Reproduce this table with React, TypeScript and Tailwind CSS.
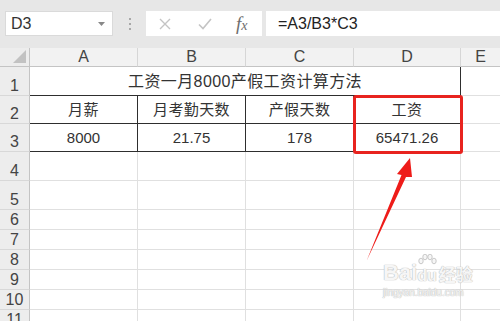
import React from "react";

const FONT = '"Liberation Sans", "Noto Sans CJK SC", sans-serif';

const cols = ["A", "B", "C", "D", "E"];

function RowHead({ n }: { n: number }) {
  return (
    <div className="bg-[#ededed] border-r border-r-[#c4c4c4] border-b border-b-[#d8d8d8] flex items-end justify-center text-[16px] leading-[18px] text-[#444]">
      {n}
    </div>
  );
}

function Cell({ children, dark, last, span }: { children?: React.ReactNode; dark?: boolean; last?: boolean; span?: boolean }) {
  const base = "flex items-center justify-center text-[#333] pt-[2px]";
  let border = "";
  if (dark) border = "border-r border-b border-[#2e2e2e]";
  else if (last) border = "border-b border-[#e0e0e0]";
  else border = "border-r border-b border-[#e0e0e0]";
  return <div className={`${base} ${border} ${span ? "col-span-4" : ""}`}>{children}</div>;
}

export default function App() {
  const emptyRows = [4, 5, 6, 7, 8, 9, 10, 11];
  return (
    <div className="relative w-[500px] h-[321px] overflow-hidden bg-white" style={{ fontFamily: FONT }}>
      {/* Toolbar */}
      <div className="h-[48px] bg-[#e7e7e7] flex items-start pt-[11px] pl-[5px]">
        <div className="w-[108px] h-[25px] bg-white border border-[#dadada] flex items-center justify-between pl-[5px] pr-[7px]">
          <span className="text-[16px] text-[#333]">D3</span>
          <svg width="7" height="4" viewBox="0 0 7 4"><path d="M0 0h7L3.5 4z" fill="#888" /></svg>
        </div>
        <div className="w-[33px] h-[25px] flex flex-col items-center justify-center gap-[3px]">
          <span className="w-[2px] h-[2px] bg-[#a8a8a8]" />
          <span className="w-[2px] h-[2px] bg-[#a8a8a8]" />
          <span className="w-[2px] h-[2px] bg-[#a8a8a8]" />
        </div>
        <div className="w-[116px] h-[25px] bg-white flex items-center">
          <svg className="ml-[13px]" width="12" height="12" viewBox="0 0 12 12">
            <path d="M1 1L11 11M11 1L1 11" stroke="#c4c4c4" strokeWidth="1.4" />
          </svg>
          <svg className="ml-[27px]" width="14" height="12" viewBox="0 0 14 12">
            <path d="M1 6.5L5 10.5L13 1" stroke="#c4c4c4" strokeWidth="1.6" fill="none" />
          </svg>
          <span className="ml-[24px] text-[19px] leading-none italic text-[#6e6e6e]" style={{ fontFamily: '"Liberation Serif", serif' }}>
            f<span className="text-[14px]">x</span>
          </span>
        </div>
        <div className="ml-[4px] flex-1 h-[25px] bg-white flex items-center pl-[12px] text-[16px] text-[#222]">
          =A3/B3*C3
        </div>
      </div>

      {/* Grid */}
      <div className="grid grid-cols-[30px_108px_108px_108px_107px_39px] grid-rows-[19px_29px_28px_28px_29px_29px_20px_20px_20px_20px_20px_20px]">
        {/* header row */}
        <div className="relative bg-[#ededed] border-r border-r-[#c4c4c4] border-b border-b-[#c4c4c4]">
          <svg className="absolute right-[3px] bottom-[3px]" width="13" height="13" viewBox="0 0 13 13">
            <path d="M13 0V13H0z" fill="#c2c2c2" />
          </svg>
        </div>
        {cols.map((c, i) => (
          <div
            key={c}
            className={`bg-[#f2f2f2] border-b border-b-[#c4c4c4] ${i < 4 ? "border-r border-r-[#d6d6d6]" : ""} flex items-center justify-center text-[16px] text-[#444]`}
          >
            {c}
          </div>
        ))}

        {/* row 1 */}
        <RowHead n={1} />
        <Cell dark span>
          <span className="text-[16px] tracking-[0.4px]">工资一月8000产假工资计算方法</span>
        </Cell>
        <Cell last />

        {/* row 2 */}
        <RowHead n={2} />
        {["月薪", "月考勤天数", "产假天数", "工资"].map((t) => (
          <Cell key={t} dark>
            <span className="text-[15px] tracking-[0.4px]">{t}</span>
          </Cell>
        ))}
        <Cell last />

        {/* row 3 */}
        <RowHead n={3} />
        {["8000", "21.75", "178", "65471.26"].map((t) => (
          <Cell key={t} dark>
            <span className="text-[15px]">{t}</span>
          </Cell>
        ))}
        <Cell last />

        {emptyRows.map((r) => (
          <React.Fragment key={r}>
            <RowHead n={r} />
            <Cell />
            <Cell />
            <Cell />
            <Cell />
            <Cell last />
          </React.Fragment>
        ))}
      </div>

      {/* red highlight box */}
      <div className="absolute left-[353px] top-[95px] w-[110px] h-[59px] border-[3px] border-[#e8231f] rounded-[3px]" />

      {/* arrow */}
      <svg className="absolute left-0 top-0" width="500" height="321" viewBox="0 0 500 321">
        <polygon points="410,158 397,174 401.5,175 366.5,261 406,177 412,177" fill="#ee1c19" />
      </svg>

      {/* watermark */}
      <div className="absolute left-[383px] top-[262px] flex flex-col items-start text-[#f6f6f6] [text-shadow:0_0_1px_#b8b8b8,0_0_1px_#b8b8b8]">
        <div className="flex items-end leading-none">
          <span className="text-[22px] font-bold">Bai</span>
          <span className="relative text-[16px] font-bold">
            <svg className="absolute left-[0px] -top-[14px]" width="20" height="16" viewBox="0 0 20 16">
              <g fill="#f6f6f6" stroke="#bdbdbd" strokeWidth="0.8">
                <ellipse cx="4" cy="7" rx="2.2" ry="2.8" />
                <ellipse cx="8" cy="3" rx="2.2" ry="2.8" />
                <ellipse cx="13" cy="3" rx="2.2" ry="2.8" />
                <ellipse cx="17" cy="7" rx="2.2" ry="2.8" />
              </g>
            </svg>
            du
          </span>
          <span className="ml-[2px] text-[17px] font-bold">经验</span>
        </div>
        <span className="mt-[4px] text-[10px] leading-none">jingyan.baidu.com</span>
      </div>
    </div>
  );
}
